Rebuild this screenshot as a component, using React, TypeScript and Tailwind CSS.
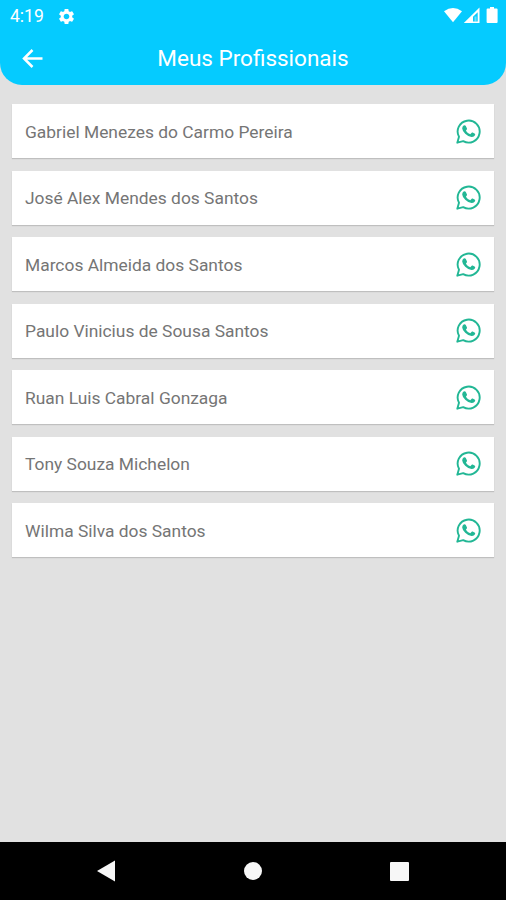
import React from "react";
import { MdSettings } from "react-icons/md";

interface Professional {
  id: number;
  name: string;
}

const professionals: Professional[] = [
  { id: 1, name: "Gabriel Menezes do Carmo Pereira" },
  { id: 2, name: "José Alex Mendes dos Santos" },
  { id: 3, name: "Marcos Almeida dos Santos" },
  { id: 4, name: "Paulo Vinicius de Sousa Santos" },
  { id: 5, name: "Ruan Luis Cabral Gonzaga" },
  { id: 6, name: "Tony Souza Michelon" },
  { id: 7, name: "Wilma Silva dos Santos" },
];

const WhatsAppIcon: React.FC = () => (
  <svg width="25" height="25" viewBox="0 0 25 25" fill="none">
    <path
      d="M1.300 23.700 3 17.800A11 11 0 1 1 7.200 22.100Z"
      stroke="#22b795"
      strokeWidth="1.9"
      strokeLinejoin="round"
    />
    <path
      d="M7.600 6.600Q8.900 5.700 9.800 6.900L11 9.600Q11.200 10.400 9.900 11.700Q11.500 14.300 14.300 15.300L15.700 13.700Q16.100 13.300 16.700 13.600L18.900 14.700Q19.500 15.100 19 16.300Q18 18.300 15.600 18.100Q12.300 17.700 9.200 14.700Q6.300 11.800 6.200 9.500Q6.200 7.800 7.600 6.600Z"
      fill="#22b795"
    />
  </svg>
);

const StatusBar: React.FC = () => (
  <div className="flex h-8 items-center justify-between pl-2.5 pr-2 text-white">
    <div className="flex items-center gap-[13px]">
      <span className="pt-px text-[17.5px] leading-none">4:19</span>
      <MdSettings size={19} />
    </div>
    <svg width="54" height="18" viewBox="0 0 54 18" fill="#fff">
      <path d="M0 4.300Q9 -2.500 18 4.300L9 15.200Z" />
      <path
        fillRule="evenodd"
        d="M35.500 0.500V16H19.800ZM33.700 5.200 29 9.800V14.500H33.700Z"
      />
      <path d="M30.500 9.500H32.500V14.500H30.500Z" fillOpacity="0.4" />
      <path d="M46 0h4v1.500h2.600q1 0 1 1V15q0 1-1 1h-9q-1 0-1-1V2.500q0-1 1-1H46Z" />
    </svg>
  </div>
);

const NavigationBar: React.FC = () => (
  <nav className="flex h-[58px] items-center justify-between bg-black pl-[97px] pr-[97px]">
    <svg width="18" height="22" viewBox="0 0 18 22" fill="#f7f7f7">
      <path d="M0 11 18 0.500V21.500Z" />
    </svg>
    <div className="ml-px size-[18px] rounded-full bg-[#f7f7f7]" />
    <div className="size-[19px] rounded-[1px] bg-[#f7f7f7]" />
  </nav>
);

const App: React.FC = () => {
  return (
    <div className="flex h-[900px] w-[506px] flex-col overflow-hidden bg-[#e1e1e1] font-[Roboto,sans-serif]">
      <header className="h-[85px] rounded-b-[22px] bg-[#05cbff]">
        <StatusBar />
        <div className="grid h-[53px] grid-cols-[64px_1fr_64px] items-center text-white">
          <button className="pl-[22px]">
            <svg
              width="21"
              height="19"
              viewBox="0 0 21 19"
              fill="none"
              stroke="currentColor"
              strokeWidth="2.5"
            >
              <path d="M20.500 9.500H2.500M10.500 1 2 9.500 10.500 18" />
            </svg>
          </button>
          <h1 className="pt-px text-center text-[22.5px] whitespace-nowrap">
            Meus Profissionais
          </h1>
        </div>
      </header>

      <main className="flex flex-1 flex-col gap-[12.5px] px-3 pt-[19px]">
        {professionals.map((item) => (
          <div
            key={item.id}
            className="flex h-[54px] items-center justify-between bg-white pl-[13px] pr-[13px] shadow-[0_1px_1px_rgba(0,0,0,0.15)]"
          >
            <span className="pt-0.5 text-[17.4px] text-[#757575]">
              {item.name}
            </span>
            <WhatsAppIcon />
          </div>
        ))}
      </main>

      <NavigationBar />
    </div>
  );
};

export default App;
